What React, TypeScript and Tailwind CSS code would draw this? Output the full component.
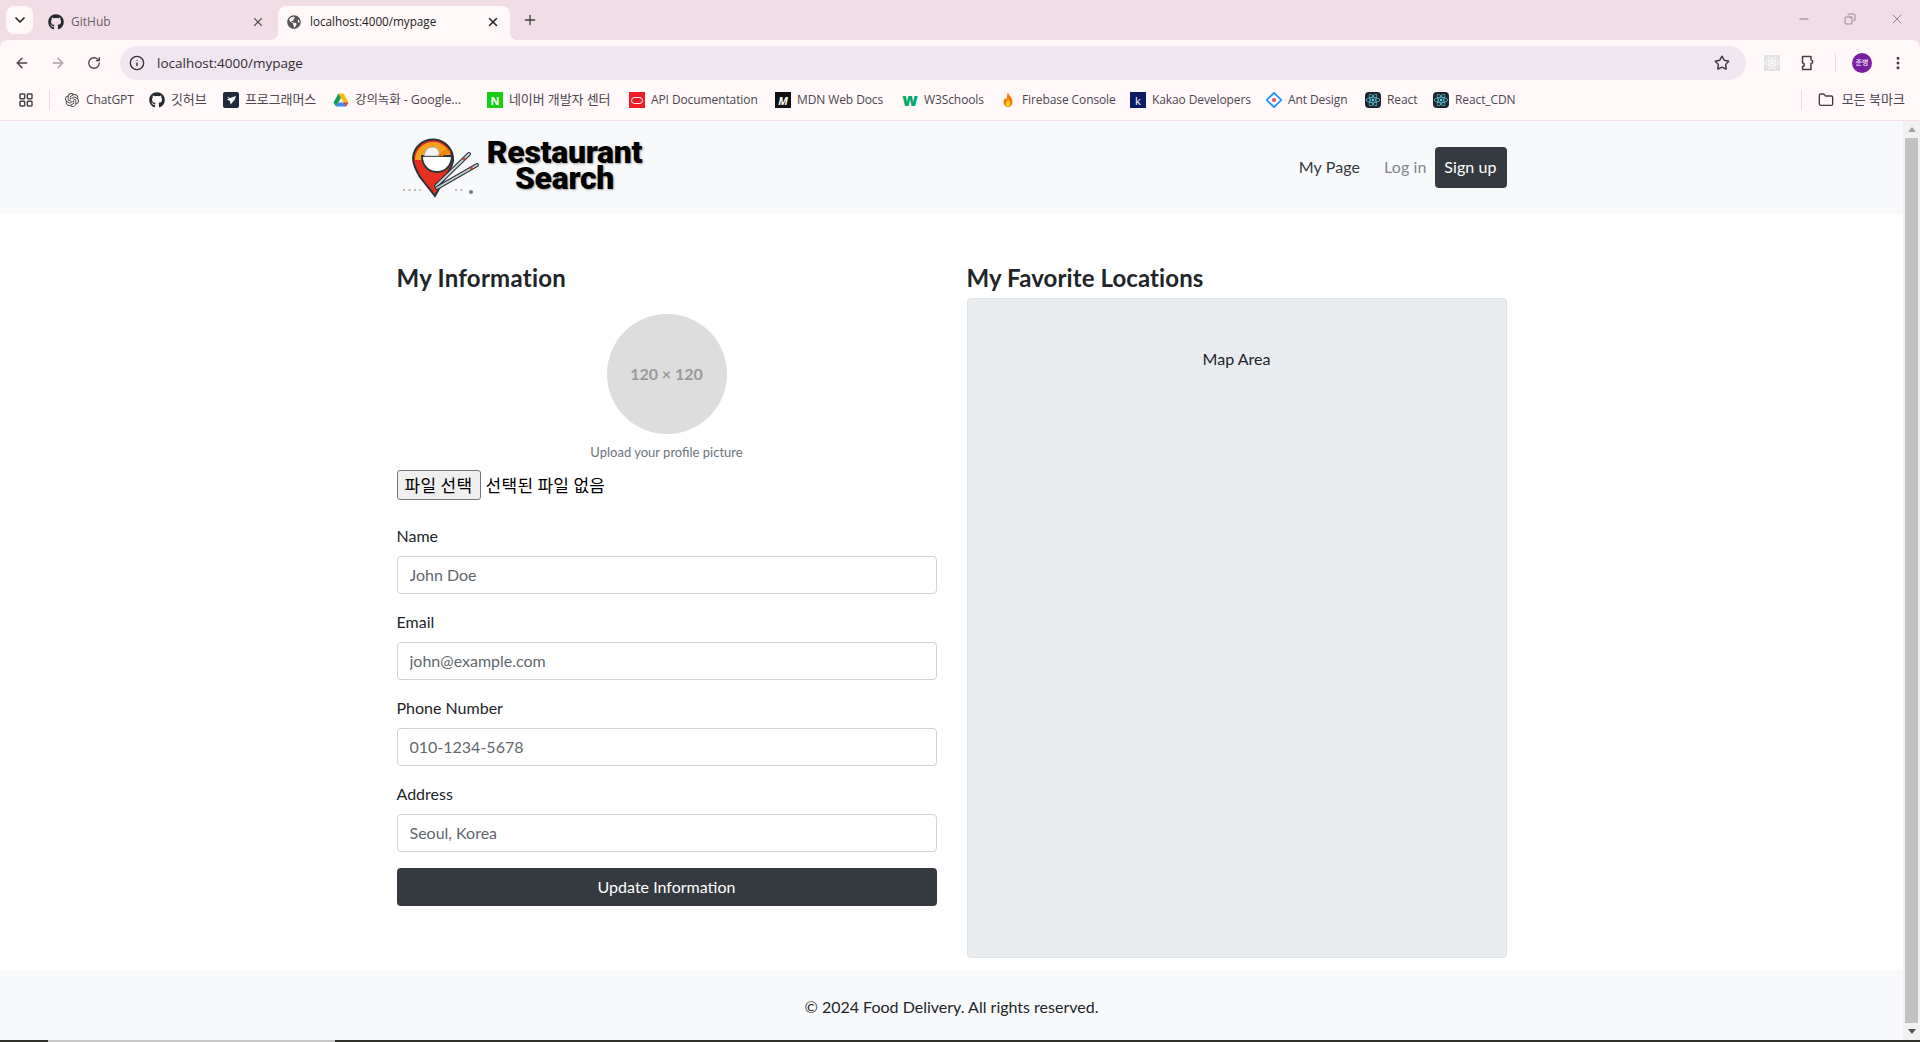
import React from 'react';
import { ArrowLeft, ArrowRight, ChevronDown, Copy, Folder, Info, LayoutGrid, Minus, MoreVertical, Plus, RotateCw, Star, X } from 'lucide-react';
import { FaGithub, FaGlobeAmericas, FaReact } from 'react-icons/fa';
import { SiOpenai } from 'react-icons/si';

const uiFont = "font-['Open_Sans','Noto_Sans_CJK_KR',sans-serif]";

const DriveIcon = () => (
  <svg viewBox="0 0 16 16" className="h-4 w-4">
    <path d="M5.500 1.500h5L15.500 10.500h-5z" fill="#fbbc04" />
    <path d="M5.500 1.500 .5 10.500 3 14.500 8 6z" fill="#0f9d58" />
    <path d="M3 14.500h10l2.500-4H5.500z" fill="#4285f4" />
    <path d="M13 14.500l2.500-4h-5z" fill="#ea4335" />
  </svg>
);

const FlameIcon = () => (
  <svg viewBox="0 0 16 16" className="h-4 w-4">
    <path d="M8 .5c.6 2.600 4.500 4.800 4.500 9.200A4.500 5.300 0 0 1 3.500 10c0-2 1-3 1.700-4.300.5 1 1 1.300 1.500 1.500C6.900 5 7 2.500 8 .5z" fill="#f57c00" />
    <path d="M8 7c.4 1.500 2.300 2.700 2.300 4.800a2.300 2.900 0 0 1-4.600 0C5.700 10 7.500 9 8 7z" fill="#ffca28" />
  </svg>
);

const AntIcon = () => (
  <svg viewBox="0 0 16 16" className="h-4 w-4">
    <path d="M8 .8 15.200 8 8 15.200 .8 8z" fill="none" stroke="#1890ff" strokeWidth="1.700" />
    <circle cx="8" cy="8" r="2" fill="#f5455c" />
  </svg>
);

const ReactIcon = () => (
  <span className="flex h-4 w-4 items-center justify-center rounded-sm bg-[#20232a]">
    <FaReact className="h-3.5 w-3.5 text-[#61dafb]" />
  </span>
);

const ProgrammersIcon = () => (
  <svg viewBox="0 0 16 16" className="h-4 w-4">
    <rect width="16" height="16" rx="2" fill="#1e2b3d" />
    <path d="M4 4.500 7 6l6-2-1.500 4-4 4.500L7 9 3.500 7.500 6 7z" fill="#fff" />
  </svg>
);

const OracleIcon = () => (
  <span className="flex h-4 w-4 items-center justify-center bg-[#ee1c25]">
    <span className="h-[7px] w-[12px] rounded-full border-[1.5px] border-white" />
  </span>
);

const ExtensionIcon = () => (
  <svg viewBox="0 0 16 16" className="h-4 w-4" fill="none" stroke="#443c44" strokeWidth="1.500" strokeLinejoin="round">
    <path d="M2.500 1.500h8.500v3.500a1.500 1.500 0 0 1 0 3.500v6h-8.500v-3a1.500 1.500 0 0 0 0-3.500z" />
  </svg>
);

const Square = ({ bg, children }: { bg: string; children: React.ReactNode }) => (
  <span className={`flex h-4 w-4 items-center justify-center text-[11px] leading-none font-bold text-white ${bg}`}>{children}</span>
);

const bookmarks: { label: string; width: string; size: string; icon: React.ReactNode }[] = [
  { label: 'ChatGPT', width: 'w-[47px]', size: 'text-[12px]', icon: <SiOpenai className="h-3.5 w-3.5 text-[#444]" /> },
  { label: '깃허브', width: 'w-[36px]', size: 'text-[13px]', icon: <FaGithub className="h-4 w-4 text-[#24292f]" /> },
  { label: '프로그래머스', width: 'w-[72px]', size: 'text-[13px]', icon: <ProgrammersIcon /> },
  { label: '강의녹화 - Google...', width: 'w-[116px]', size: 'text-[12.500px]', icon: <DriveIcon /> },
  { label: '네이버 개발자 센터', width: 'w-[104px]', size: 'text-[13px]', icon: <Square bg="bg-[#19ce0f]">N</Square> },
  { label: 'API Documentation', width: 'w-[108px]', size: 'text-[12px]', icon: <OracleIcon /> },
  { label: 'MDN Web Docs', width: 'w-[89px]', size: 'text-[12px]', icon: <Square bg="bg-[#111] italic">M</Square> },
  { label: 'W3Schools', width: 'w-[60px]', size: 'text-[12px]', icon: <span className="w-4 text-center text-[17px] leading-3 font-black text-[#04aa6d]">w</span> },
  { label: 'Firebase Console', width: 'w-[92px]', size: 'text-[12px]', icon: <FlameIcon /> },
  { label: 'Kakao Developers', width: 'w-[98px]', size: 'text-[12px]', icon: <Square bg="bg-[#0a1a66] font-normal">k</Square> },
  { label: 'Ant Design', width: 'w-[61px]', size: 'text-[12px]', icon: <AntIcon /> },
  { label: 'React', width: 'w-[30px]', size: 'text-[12px]', icon: <ReactIcon /> },
  { label: 'React_CDN', width: 'w-[60px]', size: 'text-[12px]', icon: <ReactIcon /> },
];

const fields = [
  { label: 'Name', placeholder: 'John Doe' },
  { label: 'Email', placeholder: 'john@example.com' },
  { label: 'Phone Number', placeholder: '010-1234-5678' },
  { label: 'Address', placeholder: 'Seoul, Korea' },
];

const Logo = () => (
  <div className="flex items-center">
    <svg viewBox="0 0 90 70" className="-mt-[5px] ml-[3px] h-[70px] w-[90px]">
      <path d="M13 28a20 20 0 0 1 40 3c-.5 5-3 8-6 13L35 66 20 47c-3-5-7-12-7-19z" fill="#e5301f" stroke="#26343a" strokeWidth="2" />
      <path d="M15 30a18 18 0 0 1 36 0z" fill="#f7a01c" />
      <path d="M22 26h30c-.5 9-6 16-15 16S22 35 22 26z" fill="#fff" stroke="#26343a" strokeWidth="1.800" />
      <path d="M24 26c1-6 4-9 9-9 4 0 6 3 7 9z" fill="#f2f2f2" stroke="#8a9a9a" strokeWidth=".7" />
      <path d="m38 26 10-7M41 26l9-5" stroke="#e8830c" strokeWidth="2" />
      <path d="M36 56 69 24" stroke="#26343a" strokeWidth="4" strokeLinecap="round" />
      <path d="M36 56 69 24" stroke="#c9d1d5" strokeWidth="1.800" strokeLinecap="round" />
      <path d="M37 58 77 35" stroke="#26343a" strokeWidth="4" strokeLinecap="round" />
      <path d="M37 58 77 35" stroke="#c9d1d5" strokeWidth="1.800" strokeLinecap="round" />
      <path d="m63 30 2-2M70 39l2.500-1.500" stroke="#d8402a" strokeWidth="2.400" />
      <path d="M3 60h18M55 60h11" stroke="#777" strokeWidth="1.100" strokeDasharray="2 3.500" />
      <circle cx="71" cy="62" r="2" fill="#777" />
    </svg>
    <div className="-mt-[5px] -ml-[3px] flex w-[156px] flex-col items-center font-['Roboto',sans-serif] text-[32px] leading-[26px] font-black tracking-[-0.3px] text-black [text-shadow:1px_1px_2px_rgba(0,0,0,0.35)]">
      <span>Restaurant</span>
      <span>Search</span>
    </div>
  </div>
);

export default function App() {
  return (
    <div className="flex h-[1042px] w-[1920px] flex-col overflow-hidden bg-white font-['Lato',sans-serif] text-[#212529]">
      {/* browser chrome */}
      <div className={`${uiFont} flex h-[121px] flex-col border-b border-[#f5dfe8] bg-[#f2dde6] text-[12px] text-[#45404a]`}>
        <div className="flex h-10 shrink-0 items-end">
          <div className="mb-[6px] ml-[6px] flex h-[28px] w-[27px] items-center justify-center rounded-lg bg-[#fff8f8]">
            <ChevronDown className="h-4 w-4 text-[#222]" strokeWidth={2.5} />
          </div>
          <div className="ml-[5px] flex h-[34px] w-[240px] items-center pr-[13px] pb-[3px] pl-[10px]">
            <FaGithub className="h-4 w-4 text-[#24292f]" />
            <span className="ml-[7px] flex-1 text-[#6a5f68]">GitHub</span>
            <X className="h-3.5 w-3.5 text-[#555]" />
          </div>
          <div className="relative flex h-[34px] w-[232px] items-center rounded-t-lg bg-[#fff8f8] pr-[10px] pb-[3px] pl-[9px]">
            <span className="absolute bottom-0 -left-2 h-2 w-2 bg-[radial-gradient(circle_at_0_0,#f2dde6_8px,#fff8f8_8.5px)]" />
            <FaGlobeAmericas className="h-3.5 w-3.5 text-[#555]" />
            <span className="ml-[9px] flex-1 text-[11.700px] text-[#222]">localhost:4000/mypage</span>
            <X className="h-3.5 w-3.5 text-[#222]" strokeWidth={2.5} />
            <span className="absolute -right-2 bottom-0 h-2 w-2 bg-[radial-gradient(circle_at_100%_0,#f2dde6_8px,#fff8f8_8.5px)]" />
          </div>
          <Plus className="mb-[12px] ml-[12px] h-4 w-4 text-[#444]" />
          <div className="flex-1" />
          <div className="mb-[13px] flex items-center gap-[33px] pr-[15px] text-[#7b6c76]">
            <Minus className="h-3.5 w-3.5" strokeWidth={1.5} />
            <Copy className="h-3 w-3 -scale-x-100" strokeWidth={1.5} />
            <X className="h-4 w-4" strokeWidth={1.2} />
          </div>
        </div>
        <div className="flex h-10 shrink-0 items-end rounded-t-lg bg-[#fff8f8] pr-[13px] pl-[14px]">
          <div className="flex h-[34px] w-[106px] items-center gap-[20px]">
            <ArrowLeft className="h-4 w-4 text-[#4a3f47]" strokeWidth={2.2} />
            <ArrowRight className="h-4 w-4 text-[#ab9fa8]" strokeWidth={2.2} />
            <RotateCw className="ml-[1px] h-3.5 w-3.5 text-[#4a3f47]" strokeWidth={2.2} />
          </div>
          <div className="flex h-[34px] w-[1626px] items-center rounded-full bg-[#f0e6f0] pr-[16px] pl-[9px]">
            <Info className="h-4 w-4 text-[#332d33]" strokeWidth={2} />
            <span className="ml-[12px] flex-1 text-[13.500px] text-[#332d33]">localhost:4000/mypage</span>
            <Star className="h-4 w-4 text-[#443c44]" strokeWidth={2.2} />
          </div>
          <div className="flex h-[34px] flex-1 items-center pl-[18px]">
            <span className="flex h-4 w-4 items-center justify-center bg-[#e2e2e2]">
              <FaReact className="h-3.5 w-3.5 text-white" />
            </span>
            <span className="ml-[20px]">
              <ExtensionIcon />
            </span>
            <span className="ml-[19px] h-[20px] w-px bg-[#f5d5e5]" />
            <span className="ml-[16px] flex h-5 w-5 items-center justify-center rounded-full bg-[#7b1fa2] text-[7px] text-white">준병</span>
            <MoreVertical className="ml-[18px] h-4 w-4 text-[#443c44]" strokeWidth={2.5} />
          </div>
        </div>
        <div className="flex h-10 shrink-0 items-center bg-[#fff8f8] pl-[18px] text-[#4b4650]">
          <LayoutGrid className="h-4 w-4 text-[#444]" strokeWidth={2.2} />
          <span className="mr-[14px] ml-[15px] h-[20px] w-px bg-[#f5d5e5]" />
          <div className="flex items-center gap-[16px]">
            {bookmarks.map((b) => (
              <div key={b.label} className="flex items-center gap-[6px]">
                <span className="flex h-4 w-4 items-center justify-center">{b.icon}</span>
                <span className={`${b.width} ${b.size} whitespace-nowrap tracking-[-0.1px]`}>{b.label}</span>
              </div>
            ))}
          </div>
          <div className="flex-1" />
          <span className="h-[20px] w-px bg-[#f5d5e5]" />
          <Folder className="ml-[16px] h-4 w-4 text-[#443c44]" strokeWidth={2} />
          <span className="mr-[15px] ml-[8px] text-[13px] whitespace-nowrap">모든 북마크</span>
        </div>
      </div>

      <div className="flex min-h-0 flex-1">
        <div className="flex min-w-0 flex-1 flex-col">
          <nav className="h-[93px] shrink-0 bg-[#f8f9fa]">
            <div className="mx-auto flex h-full w-[1110px] items-center justify-between">
              <Logo />
              <div className="flex items-center tracking-[0.1px]">
                <a className="mr-[24px] -mt-[1px] text-[#343a40]">My Page</a>
                <a className="mr-[8px] -mt-[1px] text-[#80868b]">Log in</a>
                <a className="flex h-[41px] w-[72px] items-center justify-center rounded-[4px] bg-[#343a40] pb-[1px] text-white">Sign up</a>
              </div>
            </div>
          </nav>

          <main className="mx-auto flex h-[756px] w-[1110px] shrink-0 gap-[30px] pt-[49px]">
            <section className="w-[540px]">
              <h2 className="mb-[22px] h-[29px] text-[24px] leading-[29px] font-bold tracking-[0.25px] text-[#212529]">My Information</h2>
              <div className="flex flex-col items-center">
                <div className="flex h-[120px] w-[120px] items-center justify-center rounded-full bg-[#dddddd] text-[16px] font-bold text-[#999]">120 × 120</div>
                <p className="mt-[9px] mb-[8px] text-[13px] leading-[19px] text-[#6c757d]">Upload your profile picture</p>
              </div>
              <div className="mb-[24px] flex h-[30px] items-center font-['Noto_Sans_CJK_KR',sans-serif] text-[17px] tracking-[0.3px] text-black">
                <span className="flex h-[30px] w-[84px] items-center justify-center rounded-[3px] border border-[#767676] bg-[#efefef]">파일 선택</span>
                <span className="ml-[5px]">선택된 파일 없음</span>
              </div>
              {fields.map((f) => (
                <div key={f.label} className="mb-[16px]">
                  <label className="mb-[8px] block text-[16px] leading-[24px]">{f.label}</label>
                  <input
                    placeholder={f.placeholder}
                    className="block h-[38px] w-full rounded-[4px] border border-[#ced4da] bg-white px-[12px] pb-[2px] text-[16px] outline-none placeholder:text-[#5f676e]"
                  />
                </div>
              ))}
              <button className="h-[38px] w-full rounded-[4px] bg-[#343a40] text-[16px] text-white">Update Information</button>
            </section>
            <section className="w-[540px]">
              <h2 className="mb-[6px] h-[29px] text-[24px] leading-[29px] font-bold tracking-[0.1px] text-[#212529]">My Favorite Locations</h2>
              <div className="h-[660px] rounded-[4px] border border-[#dee2e6] bg-[#e9ecef] pt-[48px] text-center text-[16px] leading-[24px]">Map Area</div>
            </section>
          </main>

          <footer className="flex h-[70px] shrink-0 items-center justify-center bg-[#f8f9fa] pt-[3px] text-[16px]">© 2024 Food Delivery. All rights reserved.</footer>
        </div>

        {/* scrollbar */}
        <div className="flex w-[17px] shrink-0 flex-col items-center bg-[#f1f1f1]">
          <span className="mt-[6px] h-0 w-0 border-x-[4px] border-b-[5px] border-x-transparent border-b-[#a3a3a3]" />
          <span className="mt-[6px] h-[885px] w-[13px] bg-[#c1c1c1]" />
          <span className="mt-[6px] h-0 w-0 border-x-[4px] border-t-[5px] border-x-transparent border-t-[#505050]" />
        </div>
      </div>

      {/* desktop taskbar peeking out below the window */}
      <div className="flex h-[2px] shrink-0 bg-[#2f3029]">
        <span className="ml-[48px] w-[287px] bg-[#c8c8c8]" />
      </div>
    </div>
  );
}
